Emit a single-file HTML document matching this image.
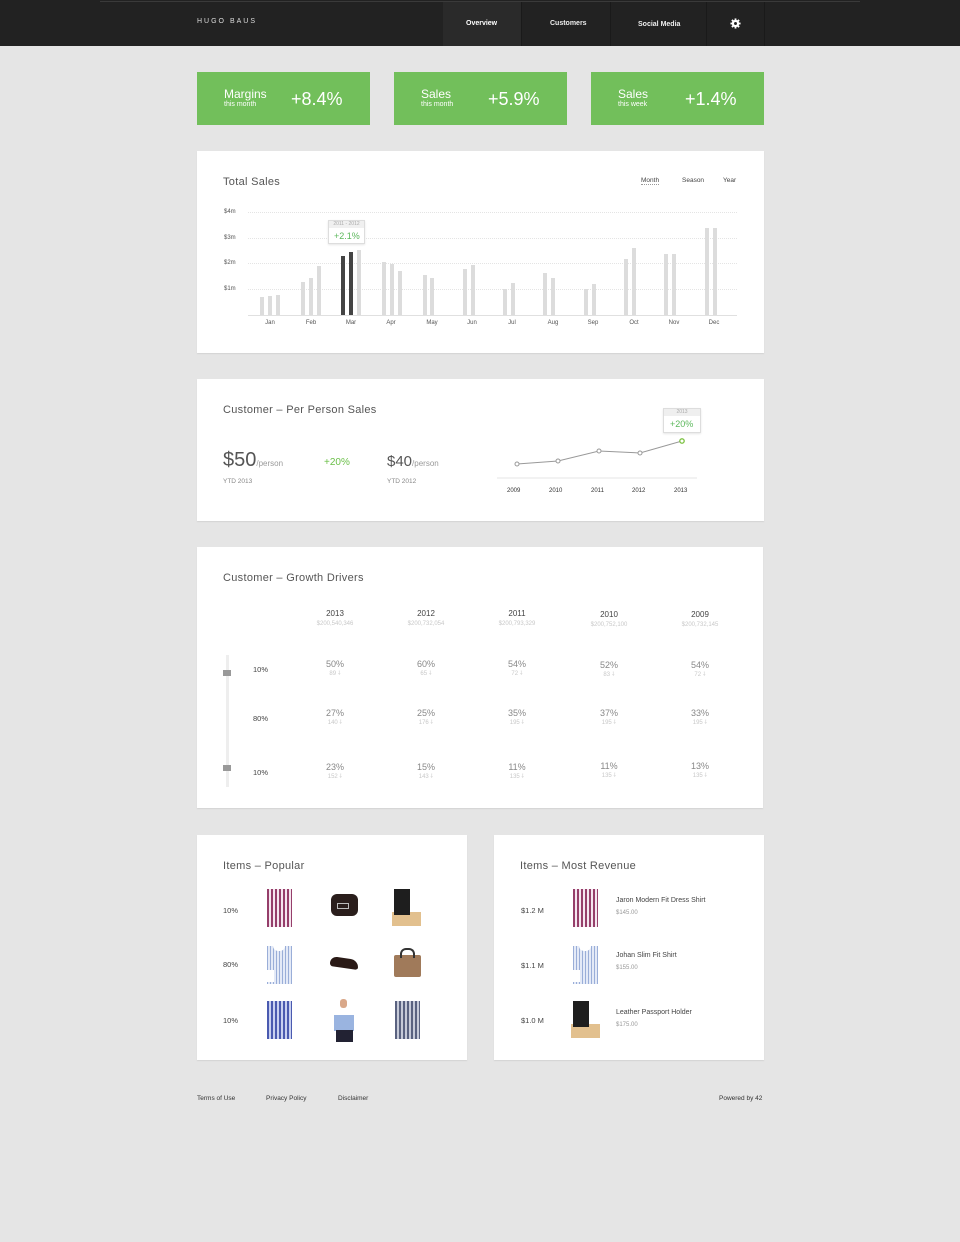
<!DOCTYPE html>
<html><head><meta charset="utf-8"><style>
*{margin:0;padding:0;box-sizing:border-box}
body{width:960px;height:1242px;background:#e5e5e5;font-family:"Liberation Sans",sans-serif;position:relative;overflow:hidden;color:#444}
.a{position:absolute;white-space:nowrap}
.hdr{position:absolute;left:0;top:0;width:960px;height:46px;background:#222}
.panel{position:absolute;background:#fff;box-shadow:0 1px 1px rgba(0,0,0,.08)}
.green{position:absolute;top:72px;width:173px;height:53px;background:#72bf5b;color:#fff}
.green .t{position:absolute;left:27px;top:15px;font-size:12px}
.green .s{position:absolute;left:27px;top:29px;font-size:7px}
.green .v{position:absolute;left:94px;top:17px;font-size:18px}
.ttl{font-size:11px;color:#555;letter-spacing:.3px}
.grid{position:absolute;left:248px;width:489px;border-top:1px dotted #e4e4e4}
.bar{position:absolute;width:4px;background:#dcdcdc;bottom:927px}
.yl{font-size:6px;color:#555}
.ml{font-size:6px;color:#555;width:30px;text-align:center}
.col{position:absolute;width:80px;text-align:center}
.yr{font-size:8px;color:#444}
.amt{font-size:6px;color:#c8c8c8}
.pct{font-size:9px;color:#888}
.cnt{font-size:6px;color:#c8c8c8}
.lbl{font-size:7.5px;color:#444}
.shirt{position:absolute;width:25px;height:38px}
</style></head><body>
<div class="hdr"></div>
<div class="a" style="left:100px;top:1px;width:760px;height:1px;background:#3a3a3a"></div>
<div class="a" style="left:443px;top:2px;width:78px;height:44px;background:#2a2a2a"></div>
<div class="a" style="left:521px;top:2px;width:1px;height:44px;background:#1a1a1a"></div>
<div class="a" style="left:610px;top:2px;width:1px;height:44px;background:#1a1a1a"></div>
<div class="a" style="left:706px;top:2px;width:1px;height:44px;background:#1a1a1a"></div>
<div class="a" style="left:764px;top:2px;width:1px;height:44px;background:#1a1a1a"></div>
<div class="a" style="left:197px;top:18px;font-size:7px;color:#ddd;letter-spacing:2px">HUGO BAUS</div>
<div class="a" style="left:466px;top:20px;font-size:7px;color:#fff;font-weight:bold">Overview</div>
<div class="a" style="left:550px;top:20px;font-size:7px;color:#eee;font-weight:bold">Customers</div>
<div class="a" style="left:638px;top:21px;font-size:7px;color:#eee;font-weight:bold">Social Media</div>
<svg class="a" style="left:730px;top:18px" width="11" height="11" viewBox="0 0 12 12"><g fill="#fff"><circle cx="6" cy="6" r="4"/><rect x="5" y="0.5" width="2" height="11"/><rect x="0.5" y="5" width="11" height="2"/><rect x="5" y="0.5" width="2" height="11" transform="rotate(45 6 6)"/><rect x="5" y="0.5" width="2" height="11" transform="rotate(-45 6 6)"/></g><circle cx="6" cy="6" r="1.6" fill="#222"/></svg>

<div class="green" style="left:197px"><div class="t">Margins</div><div class="s">this month</div><div class="v">+8.4%</div></div>
<div class="green" style="left:394px"><div class="t">Sales</div><div class="s">this month</div><div class="v">+5.9%</div></div>
<div class="green" style="left:591px"><div class="t">Sales</div><div class="s">this week</div><div class="v">+1.4%</div></div>

<div class="panel" style="left:197px;top:151px;width:567px;height:202px"></div>
<div class="a ttl" style="left:223px;top:176px">Total Sales</div>
<div class="a" style="left:641px;top:177px;font-size:6.5px;color:#444;border-bottom:1px dotted #999">Month</div>
<div class="a" style="left:682px;top:177px;font-size:6.5px;color:#444">Season</div>
<div class="a" style="left:723px;top:177px;font-size:6.5px;color:#444">Year</div>
<div class="a yl" style="left:224px;top:209px">$4m</div>
<div class="a yl" style="left:224px;top:235px">$3m</div>
<div class="a yl" style="left:224px;top:260px">$2m</div>
<div class="a yl" style="left:224px;top:286px">$1m</div>
<div class="grid" style="top:212px"></div><div class="grid" style="top:238px"></div><div class="grid" style="top:263px"></div><div class="grid" style="top:289px"></div>
<div class="a" style="left:248px;top:315px;width:489px;height:1px;background:#e0e0e0"></div>
<div class="bar" style="left:260px;height:18px"></div><div class="bar" style="left:268px;height:19px"></div><div class="bar" style="left:276px;height:20px"></div>
<div class="bar" style="left:301px;height:33px"></div><div class="bar" style="left:309px;height:37px"></div><div class="bar" style="left:317px;height:49px"></div>
<div class="bar" style="left:341px;height:59px;background:#444"></div><div class="bar" style="left:349px;height:63px;background:#444"></div><div class="bar" style="left:357px;height:65px"></div>
<div class="bar" style="left:382px;height:53px"></div><div class="bar" style="left:390px;height:51px"></div><div class="bar" style="left:398px;height:44px"></div>
<div class="bar" style="left:423px;height:40px"></div><div class="bar" style="left:430px;height:37px"></div>
<div class="bar" style="left:463px;height:46px"></div><div class="bar" style="left:471px;height:50px"></div>
<div class="bar" style="left:503px;height:26px"></div><div class="bar" style="left:511px;height:32px"></div>
<div class="bar" style="left:543px;height:42px"></div><div class="bar" style="left:551px;height:37px"></div>
<div class="bar" style="left:584px;height:26px"></div><div class="bar" style="left:592px;height:31px"></div>
<div class="bar" style="left:624px;height:56px"></div><div class="bar" style="left:632px;height:67px"></div>
<div class="bar" style="left:664px;height:61px"></div><div class="bar" style="left:672px;height:61px"></div>
<div class="bar" style="left:705px;height:87px"></div><div class="bar" style="left:713px;height:87px"></div>
<div class="a" style="left:328px;top:220px;width:37px;height:24px;background:#fff;border:1px solid #ddd;box-shadow:0 1px 2px rgba(0,0,0,.1)"></div>
<div class="a" style="left:329px;top:221px;width:35px;height:7px;background:#f0f0f0;font-size:5px;color:#aaa;text-align:center;line-height:7px">2011 - 2012</div>
<div class="a" style="left:334px;top:231px;font-size:9px;color:#5cb85c">+2.1%</div>
<div class="a ml" style="left:255px;top:320px">Jan</div><div class="a ml" style="left:296px;top:320px">Feb</div><div class="a ml" style="left:336px;top:320px">Mar</div><div class="a ml" style="left:376px;top:320px">Apr</div><div class="a ml" style="left:417px;top:320px">May</div><div class="a ml" style="left:457px;top:320px">Jun</div><div class="a ml" style="left:497px;top:320px">Jul</div><div class="a ml" style="left:538px;top:320px">Aug</div><div class="a ml" style="left:578px;top:320px">Sep</div><div class="a ml" style="left:619px;top:320px">Oct</div><div class="a ml" style="left:659px;top:320px">Nov</div><div class="a ml" style="left:699px;top:320px">Dec</div>

<div class="panel" style="left:197px;top:379px;width:567px;height:142px"></div>
<div class="a ttl" style="left:223px;top:404px">Customer – Per Person Sales</div>
<div class="a" style="left:223px;top:449px;font-size:20px;color:#555">$50<span style="font-size:8px;color:#999">/person</span></div>
<div class="a" style="left:324px;top:457px;font-size:10px;color:#6cc04a">+20%</div>
<div class="a" style="left:387px;top:453px;font-size:15px;color:#555">$40<span style="font-size:8px;color:#999">/person</span></div>
<div class="a" style="left:223px;top:478px;font-size:6.5px;color:#888">YTD 2013</div>
<div class="a" style="left:387px;top:478px;font-size:6.5px;color:#888">YTD 2012</div>
<svg class="a" style="left:490px;top:430px" width="220" height="60"><line x1="7" y1="48" x2="207" y2="48" stroke="#e6e6e6"/><polyline points="27,34 68,31 109,21 150,23 192,11" fill="none" stroke="#999" stroke-width="1"/><g fill="#fff" stroke="#999"><circle cx="27" cy="34" r="2"/><circle cx="68" cy="31" r="2"/><circle cx="109" cy="21" r="2"/><circle cx="150" cy="23" r="2"/></g><circle cx="192" cy="11" r="2.2" fill="#fff" stroke="#7cc242" stroke-width="1.3"/></svg>
<div class="a" style="left:663px;top:408px;width:38px;height:25px;background:#fff;border:1px solid #ddd;box-shadow:0 1px 2px rgba(0,0,0,.1)"></div>
<div class="a" style="left:664px;top:409px;width:36px;height:7px;background:#efefef;font-size:5px;color:#aaa;text-align:center;line-height:7px">2013</div>
<div class="a" style="left:670px;top:419px;font-size:9px;color:#5cb85c">+20%</div>
<div class="a" style="left:507px;top:488px;font-size:6px;color:#333">2009</div><div class="a" style="left:549px;top:488px;font-size:6px;color:#333">2010</div><div class="a" style="left:591px;top:488px;font-size:6px;color:#333">2011</div><div class="a" style="left:632px;top:488px;font-size:6px;color:#333">2012</div><div class="a" style="left:674px;top:488px;font-size:6px;color:#333">2013</div>

<div class="panel" style="left:197px;top:547px;width:566px;height:261px"></div>
<div class="a ttl" style="left:223px;top:572px">Customer – Growth Drivers</div>
<div class="a" style="left:226px;top:655px;width:3px;height:132px;background:#eee"></div>
<div class="a" style="left:223px;top:670px;width:8px;height:6px;background:#999"></div>
<div class="a" style="left:223px;top:765px;width:8px;height:6px;background:#999"></div>
<div class="a lbl" style="left:253px;top:665px">10%</div>
<div class="a lbl" style="left:253px;top:714px">80%</div>
<div class="a lbl" style="left:253px;top:768px">10%</div>

<div class="col" style="left:295px;top:609px"><div class="yr">2013</div><div class="amt" style="margin-top:3px">$200,540,346</div></div>
<div class="col" style="left:386px;top:609px"><div class="yr">2012</div><div class="amt" style="margin-top:3px">$200,732,054</div></div>
<div class="col" style="left:477px;top:609px"><div class="yr">2011</div><div class="amt" style="margin-top:3px">$200,793,329</div></div>
<div class="col" style="left:569px;top:610px"><div class="yr">2010</div><div class="amt" style="margin-top:3px">$200,752,100</div></div>
<div class="col" style="left:660px;top:610px"><div class="yr">2009</div><div class="amt" style="margin-top:3px">$200,732,145</div></div>

<div class="col" style="left:295px;top:659px"><div class="pct">50%</div><div class="cnt">89 ⸸</div></div>
<div class="col" style="left:386px;top:659px"><div class="pct">60%</div><div class="cnt">65 ⸸</div></div>
<div class="col" style="left:477px;top:659px"><div class="pct">54%</div><div class="cnt">72 ⸸</div></div>
<div class="col" style="left:569px;top:660px"><div class="pct">52%</div><div class="cnt">83 ⸸</div></div>
<div class="col" style="left:660px;top:660px"><div class="pct">54%</div><div class="cnt">72 ⸸</div></div>

<div class="col" style="left:295px;top:708px"><div class="pct">27%</div><div class="cnt">140 ⸸</div></div>
<div class="col" style="left:386px;top:708px"><div class="pct">25%</div><div class="cnt">176 ⸸</div></div>
<div class="col" style="left:477px;top:708px"><div class="pct">35%</div><div class="cnt">195 ⸸</div></div>
<div class="col" style="left:569px;top:708px"><div class="pct">37%</div><div class="cnt">195 ⸸</div></div>
<div class="col" style="left:660px;top:708px"><div class="pct">33%</div><div class="cnt">195 ⸸</div></div>

<div class="col" style="left:295px;top:762px"><div class="pct">23%</div><div class="cnt">152 ⸸</div></div>
<div class="col" style="left:386px;top:762px"><div class="pct">15%</div><div class="cnt">143 ⸸</div></div>
<div class="col" style="left:477px;top:762px"><div class="pct">11%</div><div class="cnt">135 ⸸</div></div>
<div class="col" style="left:569px;top:761px"><div class="pct">11%</div><div class="cnt">135 ⸸</div></div>
<div class="col" style="left:660px;top:761px"><div class="pct">13%</div><div class="cnt">135 ⸸</div></div>

<div class="panel" style="left:197px;top:835px;width:270px;height:225px"></div>
<div class="a ttl" style="left:223px;top:860px">Items – Popular</div>
<div class="a lbl" style="left:223px;top:906px">10%</div>
<div class="a lbl" style="left:223px;top:960px">80%</div>
<div class="a lbl" style="left:223px;top:1016px">10%</div>
<div class="shirt a" style="left:267px;top:889px;background:repeating-linear-gradient(90deg,#8a2a5a 0 2px,#f4e4ee 2px 4px),#b05080;opacity:.9"></div>
<div class="a" style="left:331px;top:894px;width:27px;height:22px;border-radius:6px;background:#2a1e1c"></div>
<div class="a" style="left:337px;top:903px;width:12px;height:6px;border:1px solid #bbb"></div>
<div class="a" style="left:392px;top:912px;width:29px;height:14px;background:#e2c08e"></div>
<div class="a" style="left:394px;top:889px;width:16px;height:26px;background:#1e1e1e"></div>
<div class="shirt a" style="left:267px;top:946px;background:repeating-linear-gradient(90deg,#9aaed8 0 1px,#e4eaf7 1px 3px)"></div>
<div class="a" style="left:273px;top:946px;width:12px;height:5px;background:#fff;border-radius:0 0 6px 6px"></div>
<div class="a" style="left:267px;top:970px;width:7px;height:12px;background:#fff"></div>
<div class="a" style="left:330px;top:958px;width:28px;height:10px;background:#2a1a16;border-radius:8px 8px 3px 3px;transform:skewY(8deg)"></div>
<div class="a" style="left:394px;top:955px;width:27px;height:22px;background:#a07a5a;border-radius:2px"></div>
<div class="a" style="left:400px;top:948px;width:15px;height:10px;border:2px solid #333;border-bottom:none;border-radius:6px 6px 0 0"></div>
<div class="shirt a" style="left:267px;top:1001px;background:repeating-linear-gradient(90deg,#4a5ab0 0 2px,#c8d0f0 2px 4px)"></div>
<div class="a" style="left:334px;top:1015px;width:20px;height:16px;background:#9ab4e0"></div>
<div class="a" style="left:340px;top:999px;width:7px;height:9px;background:#d9a88a;border-radius:3px"></div>
<div class="a" style="left:336px;top:1030px;width:17px;height:12px;background:#223"></div>
<div class="shirt a" style="left:395px;top:1001px;background:repeating-linear-gradient(90deg,#5a6280 0 2px,#c6cad8 2px 4px)"></div>

<div class="panel" style="left:494px;top:835px;width:270px;height:225px"></div>
<div class="a ttl" style="left:520px;top:860px">Items – Most Revenue</div>
<div class="a lbl" style="left:521px;top:906px">$1.2 M</div>
<div class="a lbl" style="left:521px;top:961px">$1.1 M</div>
<div class="a lbl" style="left:521px;top:1016px">$1.0 M</div>
<div class="shirt a" style="left:573px;top:889px;background:repeating-linear-gradient(90deg,#8a2a5a 0 2px,#f4e4ee 2px 4px);opacity:.9"></div>
<div class="shirt a" style="left:573px;top:946px;background:repeating-linear-gradient(90deg,#9aaed8 0 1px,#e4eaf7 1px 3px)"></div>
<div class="a" style="left:579px;top:946px;width:12px;height:5px;background:#fff;border-radius:0 0 6px 6px"></div>
<div class="a" style="left:573px;top:970px;width:7px;height:12px;background:#fff"></div>
<div class="a" style="left:571px;top:1024px;width:29px;height:14px;background:#e2c08e"></div>
<div class="a" style="left:573px;top:1001px;width:16px;height:26px;background:#1e1e1e"></div>
<div class="a" style="left:616px;top:897px;font-size:7px;color:#444">Jaron Modern Fit Dress Shirt</div>
<div class="a" style="left:616px;top:910px;font-size:6px;color:#999">$145.00</div>
<div class="a" style="left:616px;top:952px;font-size:7px;color:#444">Johan Slim Fit Shirt</div>
<div class="a" style="left:616px;top:965px;font-size:6px;color:#999">$155.00</div>
<div class="a" style="left:616px;top:1009px;font-size:7px;color:#444">Leather Passport Holder</div>
<div class="a" style="left:616px;top:1022px;font-size:6px;color:#999">$175.00</div>

<div class="a" style="left:197px;top:1095px;font-size:6.5px;color:#333">Terms of Use</div>
<div class="a" style="left:266px;top:1095px;font-size:6.5px;color:#333">Privacy Policy</div>
<div class="a" style="left:338px;top:1095px;font-size:6.5px;color:#333">Disclaimer</div>
<div class="a" style="left:719px;top:1095px;font-size:6.5px;color:#333">Powered by 42</div>
</body></html>
